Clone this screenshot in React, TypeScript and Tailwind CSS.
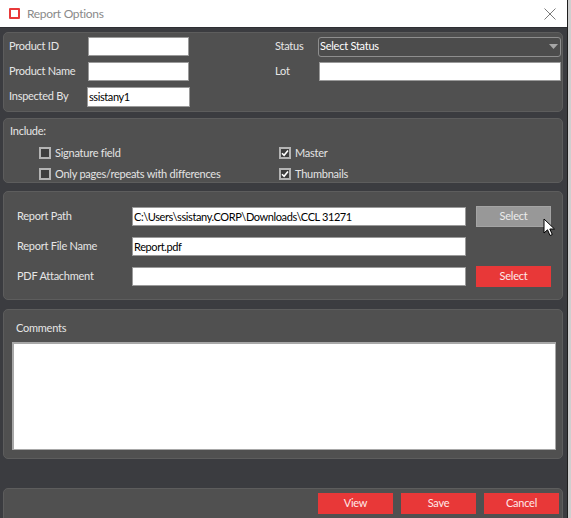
import React from 'react';

const font = "font-['Lato','Noto_Sans',sans-serif]";

function TextBox({ value = '', className = '' }: { value?: string; className?: string }) {
  return (
    <div
      className={`h-[19px] bg-white border border-[#9a9a9a] text-black text-[11px] tracking-[-0.4px] leading-[17px] pl-[1px] overflow-hidden whitespace-nowrap ${className}`}
    >
      {value}
    </div>
  );
}

function Check({ checked, label }: { checked: boolean; label: string }) {
  return (
    <div className="flex items-center h-[14px]">
      <div className="w-[12px] h-[12px] border-2 border-[#b4b4b4] bg-[#3e3e3e] flex items-center justify-center">
        {checked && (
          <svg width="8" height="8" viewBox="0 0 8 8">
            <path d="M1 4.2 L3.1 6.3 L7 1.5" stroke="#ffffff" strokeWidth="1.6" fill="none" />
          </svg>
        )}
      </div>
      <span className="ml-[4px] text-[#e4e4e4]">{label}</span>
    </div>
  );
}

function RedButton({ label, className = '' }: { label: string; className?: string }) {
  return (
    <div
      className={`w-[75px] h-[21px] bg-[#e83838] text-[#ffe9e9] flex items-center justify-center ${className}`}
    >
      {label}
    </div>
  );
}

const panel = 'shrink-0 rounded-[5px] bg-[#505050] border border-[#5d5d5d]';

export default function App() {
  return (
    <div className={`w-[571px] h-[518px] overflow-hidden flex text-[11px] tracking-[-0.25px] ${font}`}>
      <div className="w-[567px] h-full flex flex-col bg-[#3b3c40]">
        {/* title bar */}
        <div className="h-[28px] bg-white border-b border-[#2e2f33] flex items-center shrink-0">
          <div className="ml-[9px] w-[11px] h-[11px] border-2 border-[#e8393a] rounded-[1px]" />
          <span className="ml-[7px] text-[12px] tracking-[-0.3px] text-[#8a8a8a]">Report Options</span>
          <div className="ml-auto mr-[11px]">
            <svg width="12" height="12" viewBox="0 0 12 12">
              <path d="M0.5 0.5 L11.5 11.5 M11.5 0.5 L0.5 11.5" stroke="#7a7a7a" strokeWidth="1" />
            </svg>
          </div>
        </div>

        {/* product info */}
        <div className={`${panel} ml-[3px] mr-[4px] mt-[4px] h-[80px] flex pl-[5px] pt-[4px] text-[#e6e6e6]`}>
          <div className="w-[266px] flex flex-col gap-[6px]">
            <div className="flex items-center h-[19px]">
              <span className="w-[79px]">Product ID</span>
              <TextBox className="w-[101px]" />
            </div>
            <div className="flex items-center h-[19px]">
              <span className="w-[79px]">Product Name</span>
              <TextBox className="w-[101px]" />
            </div>
            <div className="flex items-center h-[19px]">
              <span className="w-[78px]">Inspected By</span>
              <TextBox className="w-[103px] !h-[20px]" value="ssistany1" />
            </div>
          </div>
          <div className="flex-1 flex flex-col gap-[6px]">
            <div className="flex items-center h-[19px]">
              <span className="w-[43px]">Status</span>
              <div className="w-[243px] h-[20px] rounded-[3px] border border-[#8e8e8e] bg-[#4c4c4c] flex items-center pl-[1px] text-white">
                <span>Select Status</span>
                <svg className="ml-auto mr-[2px]" width="9" height="6" viewBox="0 0 9 6">
                  <path d="M0 0 H9 L4.5 5 Z" fill="#a6a6a6" />
                </svg>
              </div>
            </div>
            <div className="flex items-center h-[19px]">
              <span className="w-[44px]">Lot</span>
              <TextBox className="w-[242px]" />
            </div>
          </div>
        </div>

        {/* include */}
        <div className={`${panel} ml-[3px] mr-[4px] mt-[6px] h-[65px] pl-[6px] pt-[5px] text-[#e6e6e6]`}>
          <div className="h-[14px] leading-[14px]">Include:</div>
          <div className="flex mt-[8px]">
            <div className="w-[269px] pl-[29px] flex flex-col gap-[7px]">
              <Check checked={false} label="Signature field" />
              <Check checked={false} label="Only pages/repeats with differences" />
            </div>
            <div className="flex flex-col gap-[7px]">
              <Check checked={true} label="Master" />
              <Check checked={true} label="Thumbnails" />
            </div>
          </div>
        </div>

        {/* report path */}
        <div className={`${panel} ml-[3px] mr-[4px] mt-[8px] h-[109px] pl-[13px] pt-[14px] flex flex-col gap-[9px] text-[#e6e6e6] relative`}>
          <div className="flex items-center h-[21px]">
            <span className="w-[115px]">Report Path</span>
            <TextBox className="w-[334px]" value="C:\Users\ssistany.CORP\Downloads\CCL 31271" />
            <div className="ml-[10px] w-[75px] h-[21px] bg-[#989898] border border-[#a4a4a4] text-[#ececec] flex items-center justify-center">
              Select
            </div>
          </div>
          <div className="flex items-center h-[21px]">
            <span className="w-[115px]">Report File Name</span>
            <TextBox className="w-[334px]" value="Report.pdf" />
          </div>
          <div className="flex items-center h-[21px]">
            <span className="w-[115px]">PDF Attachment</span>
            <TextBox className="w-[334px]" />
            <RedButton label="Select" className="ml-[10px]" />
          </div>
          {/* mouse pointer */}
          <svg className="absolute left-[539px] top-[26px]" width="14" height="20" viewBox="0 0 14 20">
            <path
              d="M1 1 L1 15 L4.5 11.8 L7 17.5 L9.3 16.5 L6.8 11 L11.5 11 Z"
              fill="#ffffff"
              stroke="#000000"
              strokeWidth="1"
            />
          </svg>
        </div>

        {/* comments */}
        <div className={`${panel} ml-[3px] mr-[4px] mt-[9px] h-[150px] pl-[8px] pt-[11px] text-[#e6e6e6]`}>
          <div className="pl-[4px] h-[14px] leading-[14px]">Comments</div>
          <div className="mt-[7px] w-[544px] h-[108px] bg-white border-t-2 border-l-2 border-[#a8a8a8] border-r border-b" />
        </div>

        {/* bottom buttons */}
        <div className={`${panel} ml-[3px] mr-[4px] mt-[29px] h-[40px] flex justify-end gap-[8px] pr-[3px] pt-[4px]`}>
          <RedButton label="View" />
          <RedButton label="Save" />
          <RedButton label="Cancel" />
        </div>
      </div>
      <div className="w-[4px] h-full bg-[#cfcfcf] border-l border-[#1e1e1e]" />
    </div>
  );
}
